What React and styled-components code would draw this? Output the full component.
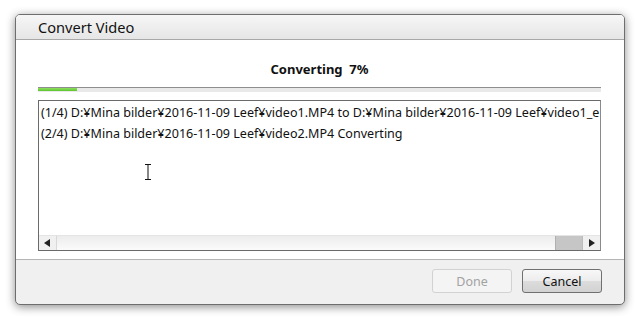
import React from 'react';
import styled, { createGlobalStyle } from 'styled-components';

const Global = createGlobalStyle`
    html, body {
        margin: 0;
        padding: 0;
        background: #ffffff;
    }
    body {
        font-family: "Noto Sans", "DejaVu Sans", sans-serif;
        color: #1a1a1a;
    }
`

const lines = [
    '(1/4) D:¥Mina bilder¥2016-11-09 Leef¥video1.MP4 to D:¥Mina bilder¥2016-11-09 Leef¥video1_e',
    '(2/4) D:¥Mina bilder¥2016-11-09 Leef¥video2.MP4 Converting',
];

function App() {
    const percent = 7;
    return (
        <Page>
            <Global />
            <Window>
                <TitleBar>Convert Video</TitleBar>
                <Body>
                    <Status>Converting&nbsp;&nbsp;{percent}%</Status>
                    <Track>
                        <Fill style={{ width: `${percent}%` }} />
                    </Track>
                    <LogBox>
                        <LogText>
                            {lines.map((l, i) => <LogLine key={i}>{l}</LogLine>)}
                        </LogText>
                        <ScrollBar>
                            <ArrowBtn>
                                <svg width="7" height="8" viewBox="0 0 7 8"><path d="M6 0 L0 4 L6 8 Z" fill="#222" /></svg>
                            </ArrowBtn>
                            <ScrollTrack>
                                <Thumb />
                            </ScrollTrack>
                            <ArrowBtn right>
                                <svg width="7" height="8" viewBox="0 0 7 8"><path d="M1 0 L7 4 L1 8 Z" fill="#222" /></svg>
                            </ArrowBtn>
                        </ScrollBar>
                        <Cursor>
                            <svg width="8" height="16" viewBox="0 0 8 16">
                                <path d="M1 0.5 H7 M4 0.5 V15.5 M1 15.5 H7" stroke="#111" strokeWidth="1" fill="none" />
                            </svg>
                        </Cursor>
                    </LogBox>
                </Body>
                <Footer>
                    <Button disabled>Done</Button>
                    <Button>Cancel</Button>
                </Footer>
            </Window>
        </Page>
    )
}

export default App

const Page = styled.div`
    width: 640px;
    height: 320px;
    padding: 14px 0 0 15px;
    box-sizing: border-box;
`

const Window = styled.div`
    width: 610px;
    height: 291px;
    box-sizing: border-box;
    border: 1px solid #6e6e6e;
    border-radius: 5px;
    background: #f0f0f0;
    box-shadow: 0 2px 10px rgba(0, 0, 0, 0.45);
    display: flex;
    flex-direction: column;
    overflow: hidden;
`

const TitleBar = styled.div`
    height: 25px;
    box-sizing: border-box;
    padding: 2px 0 0 22px;
    background: linear-gradient(#f6f6f6, #e6e6e6);
    border-bottom: 1px solid #a8a8a8;
    font-size: 14.6px;
    line-height: 20px;
    color: #111;
`

const Body = styled.div`
    height: 220px;
    background: #ffffff;
    border-bottom: 1px solid #b4b4b4;
    box-sizing: border-box;
    padding: 21px 23px 0 22px;
    display: flex;
    flex-direction: column;
`

const Status = styled.div`
    text-align: center;
    font-size: 13px;
    font-weight: bold;
    line-height: 16px;
    color: #111;
`

const Track = styled.div`
    margin-top: 10px;
    height: 4px;
    background: #e9e9e9;
    border-top: 1px solid #8e8e8e;
    position: relative;
`

const Fill = styled.div`
    height: 3px;
    background: linear-gradient(#8ee05e, #5cc52e);
`

const LogBox = styled.div`
    margin-top: 8px;
    height: 151px;
    box-sizing: border-box;
    border: 1px solid #6a6a6a;
    border-right-color: #8a8a8a;
    display: flex;
    flex-direction: column;
    position: relative;
`

const LogText = styled.div`
    flex: 1;
    padding: 1px 0 0 2px;
    overflow: hidden;
    white-space: nowrap;
`

const LogLine = styled.div`
    font-size: 12.55px;
    line-height: 21px;
    color: #111;
`

const ScrollBar = styled.div`
    height: 14px;
    display: flex;
    background: linear-gradient(#f2f2f2, #fafafa);
    border-top: 1px solid #e4e4e4;
`

const ArrowBtn = styled.div`
    width: 17px;
    display: flex;
    align-items: center;
    justify-content: center;
    background: #f0f0f0;
    border-left: ${p => p.right ? '1px solid #bcbcbc' : 'none'};
    border-right: ${p => p.right ? 'none' : '1px solid #d8d8d8'};
`

const ScrollTrack = styled.div`
    flex: 1;
    display: flex;
    justify-content: flex-end;
    background: linear-gradient(#ececec, #fbfbfb);
`

const Thumb = styled.div`
    width: 26px;
    background: #c6c6c6;
    border-left: 1px solid #b0b0b0;
`

const Cursor = styled.div`
    position: absolute;
    left: 105px;
    top: 62px;
    width: 8px;
    height: 16px;
`

const Footer = styled.div`
    flex: 1;
    display: flex;
    justify-content: flex-end;
    align-items: flex-start;
    gap: 10px;
    padding: 9px 22px 0 0;
`

const Button = styled.div`
    width: 80px;
    height: 24px;
    box-sizing: border-box;
    border-radius: 3px;
    display: flex;
    align-items: center;
    justify-content: center;
    font-size: 12.5px;
    border: 1px solid ${p => p.disabled ? '#d2d2d2' : '#707070'};
    background: ${p => p.disabled ? '#f4f4f4' : 'linear-gradient(#f8f8f8 0%, #ececec 50%, #dcdcdc 51%, #d2d2d2 100%)'};
    color: ${p => p.disabled ? '#a2a2a2' : '#111'};
`
